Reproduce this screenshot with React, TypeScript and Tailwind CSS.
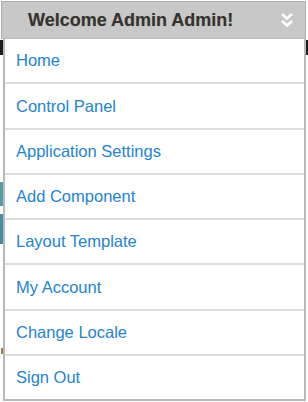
import React from "react";

const links = [
  "Home",
  "Control Panel",
  "Application Settings",
  "Add Component",
  "Layout Template",
  "My Account",
  "Change Locale",
  "Sign Out",
];

function DoubleChevron() {
  return (
    <svg width="14" height="17" viewBox="0 0 14 17" fill="none">
      <path d="M2 2 L7 6.5 L12 2" stroke="#ffffff" strokeWidth="2.6" strokeLinejoin="miter" />
      <path d="M2 9 L7 13.5 L12 9" stroke="#ffffff" strokeWidth="2.6" strokeLinejoin="miter" />
    </svg>
  );
}

export default function App() {
  return (
    <div className="relative w-[308px] h-[402px] bg-white overflow-hidden font-['Liberation_Sans',Arial,sans-serif]">
      {/* page behind the menu */}
      <div className="absolute left-0 top-[40px] w-full h-[15px] bg-[#1c1c1c]" />
      <div className="absolute left-0 top-[182px] w-[3px] h-[24px] bg-[#5a9aa6]" />
      <div className="absolute left-0 top-[214px] w-[3px] h-[30px] bg-[#4a8c99]" />
      <div className="absolute left-[1px] top-[348px] w-[2px] h-[6px] bg-[#9a7a4a]" />

      {/* dropdown */}
      <div className="absolute left-0 top-0 w-[307px] flex flex-col">
        <div className="ml-[1px] w-[305px] h-[38px] mt-[1px] flex items-center bg-[#c8c8c8] border border-[#aeaeae] border-b-[#bdbdbd]">
          <span className="ml-[26px] whitespace-nowrap text-[18px] font-bold text-[#333333] [text-shadow:0_0_1px_rgba(120,90,20,0.35)]">
            Welcome Admin Admin!
          </span>
          <span className="ml-auto mr-[11px] mt-[1px] flex">
            <DoubleChevron />
          </span>
        </div>
        <ul className="ml-[3px] w-[303px] h-[362px] flex flex-col bg-white border-x-2 border-b-2 border-[#b9b9b9]">
          {links.map((label, i) => (
            <li
              key={label}
              className={
                "flex-1 flex items-center pl-[11px] text-[16.5px] text-[#2483d2] " +
                (i < links.length - 1 ? "border-b-2 border-[#dedede]" : "")
              }
            >
              {label}
            </li>
          ))}
        </ul>
      </div>
    </div>
  );
}
